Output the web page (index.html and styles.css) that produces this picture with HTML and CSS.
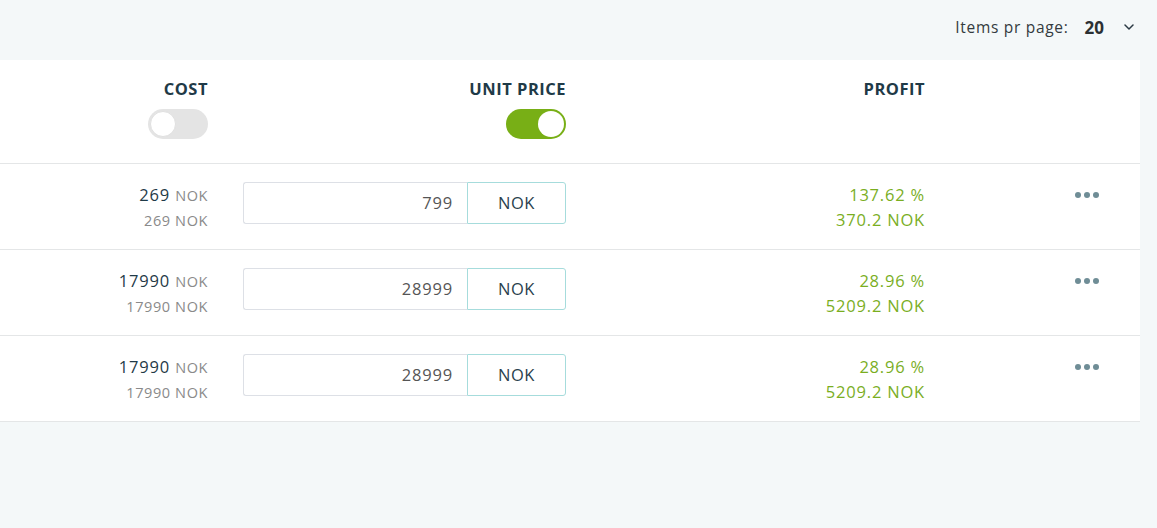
FILE: index.html
```
<!DOCTYPE html>
<html>
<head>
<meta charset="utf-8">
<link rel="stylesheet" href="styles.css">
</head>
<body>
<div class="topbar">
  <span class="ipp-label">Items pr page:</span>
  <span class="ipp-value">20</span>
  <svg class="chev" width="10" height="6" viewBox="0 0 10 6"><path d="M1 1 L5 5 L9 1" fill="none" stroke="#2b3a44" stroke-width="1.5" stroke-linecap="round" stroke-linejoin="round"/></svg>
</div>
<div class="card">
  <div class="row head">
    <div class="c-cost">
      <div class="h">COST</div>
      <div class="toggle off"><span class="knob"></span></div>
    </div>
    <div class="c-price">
      <div class="h">UNIT PRICE</div>
      <div class="toggle on"><span class="knob"></span></div>
    </div>
    <div class="c-profit"><div class="h">PROFIT</div></div>
    <div class="c-act"></div>
  </div>

  <div class="row">
    <div class="c-cost">
      <div class="main">269 <span class="cur">NOK</span></div>
      <div class="sub">269 NOK</div>
    </div>
    <div class="c-price">
      <div class="inp"><span class="num">799</span><span class="addon">NOK</span></div>
    </div>
    <div class="c-profit">
      <div class="pl">137.62 %</div>
      <div class="pl">370.2 NOK</div>
    </div>
    <div class="c-act"><span class="dots"><i></i><i></i><i></i></span></div>
  </div>

  <div class="row">
    <div class="c-cost">
      <div class="main">17990 <span class="cur">NOK</span></div>
      <div class="sub">17990 NOK</div>
    </div>
    <div class="c-price">
      <div class="inp"><span class="num">28999</span><span class="addon">NOK</span></div>
    </div>
    <div class="c-profit">
      <div class="pl">28.96 %</div>
      <div class="pl">5209.2 NOK</div>
    </div>
    <div class="c-act"><span class="dots"><i></i><i></i><i></i></span></div>
  </div>

  <div class="row">
    <div class="c-cost">
      <div class="main">17990 <span class="cur">NOK</span></div>
      <div class="sub">17990 NOK</div>
    </div>
    <div class="c-price">
      <div class="inp"><span class="num">28999</span><span class="addon">NOK</span></div>
    </div>
    <div class="c-profit">
      <div class="pl">28.96 %</div>
      <div class="pl">5209.2 NOK</div>
    </div>
    <div class="c-act"><span class="dots"><i></i><i></i><i></i></span></div>
  </div>
</div>
</body>
</html>
```
FILE: styles.css
```
html, body {
  margin: 0;
  padding: 0;
  background: #f4f8f9;
  font-family: "Open Sans", "Liberation Sans", sans-serif;
}
.topbar {
  height: 60px;
  display: flex;
  justify-content: flex-end;
  align-items: center;
  padding-right: 23px;
  box-sizing: border-box;
}
.ipp-label {
  font-size: 15.5px;
  letter-spacing: 0.7px;
  color: #333b40;
  margin-top: -6px;
}
.ipp-value {
  font-size: 17px;
  font-weight: 700;
  color: #2b3033;
  margin-left: 16px;
  margin-top: -6px;
}
.chev {
  margin-left: 20px;
  margin-top: -6px;
}
.card {
  width: 1140px;
  background: #fff;
}
.row {
  display: grid;
  grid-template-columns: 243px 323px 359px 215px;
  height: 86px;
  border-bottom: 1px solid #e4e6e7;
  box-sizing: border-box;
}
.row.head {
  height: 104px;
}
.c-cost {
  padding-right: 35px;
  text-align: right;
  display: flex;
  flex-direction: column;
  align-items: flex-end;
}
.c-price {
  display: flex;
  flex-direction: column;
  align-items: flex-end;
}
.c-profit {
  text-align: right;
}
.head .c-cost, .head .c-price, .head .c-profit {
  padding-top: 18px;
}
.h {
  font-size: 16.5px;
  letter-spacing: 0.5px;
  font-weight: 700;
  color: #1f3a47;
  line-height: 22px;
}
.toggle {
  margin-top: 9px;
  width: 60px;
  height: 30px;
  border-radius: 15px;
  box-sizing: border-box;
  display: flex;
  align-items: center;
  padding: 2px;
}
.toggle.off {
  background: #e4e4e4;
  justify-content: flex-start;
}
.toggle.on {
  background: #78af16;
  justify-content: flex-end;
}
.knob {
  width: 26px;
  height: 26px;
  border-radius: 50%;
  background: #fff;
  box-sizing: border-box;
}
.toggle.off .knob {
  border: 1px solid #e0e0e0;
}
.row:not(.head) .c-cost,
.row:not(.head) .c-profit {
  padding-top: 18px;
}
.main {
  font-size: 16.5px;
  letter-spacing: 0.8px;
  color: #1f3a47;
  line-height: 25px;
}
.cur {
  font-size: 14.5px;
  letter-spacing: 0.6px;
  color: #8a8a8a;
}
.sub {
  font-size: 14.5px;
  letter-spacing: 0.6px;
  color: #8a8a8a;
  line-height: 25px;
}
.inp {
  margin-top: 18px;
  display: flex;
  width: 323px;
  height: 42px;
}
.num {
  flex: 1;
  border: 1px solid #dde0e6;
  border-right: none;
  border-radius: 3px 0 0 3px;
  text-align: right;
  padding-right: 14px;
  font-size: 16.5px;
  letter-spacing: 0.8px;
  color: #555;
  line-height: 40px;
}
.addon {
  width: 99px;
  border: 1px solid #a6dcdc;
  border-radius: 0 3px 3px 0;
  text-align: center;
  font-size: 16.5px;
  letter-spacing: 0.5px;
  color: #2a3f4d;
  line-height: 40px;
  box-sizing: border-box;
}
.pl {
  font-size: 16.5px;
  letter-spacing: 0.8px;
  color: #7aae1f;
  line-height: 25px;
}
.c-act {
  padding-top: 28px;
  padding-left: 150px;
}
.dots {
  display: flex;
  gap: 3px;
}
.dots i {
  width: 6px;
  height: 6px;
  border-radius: 50%;
  background: #6f8d96;
}
```
